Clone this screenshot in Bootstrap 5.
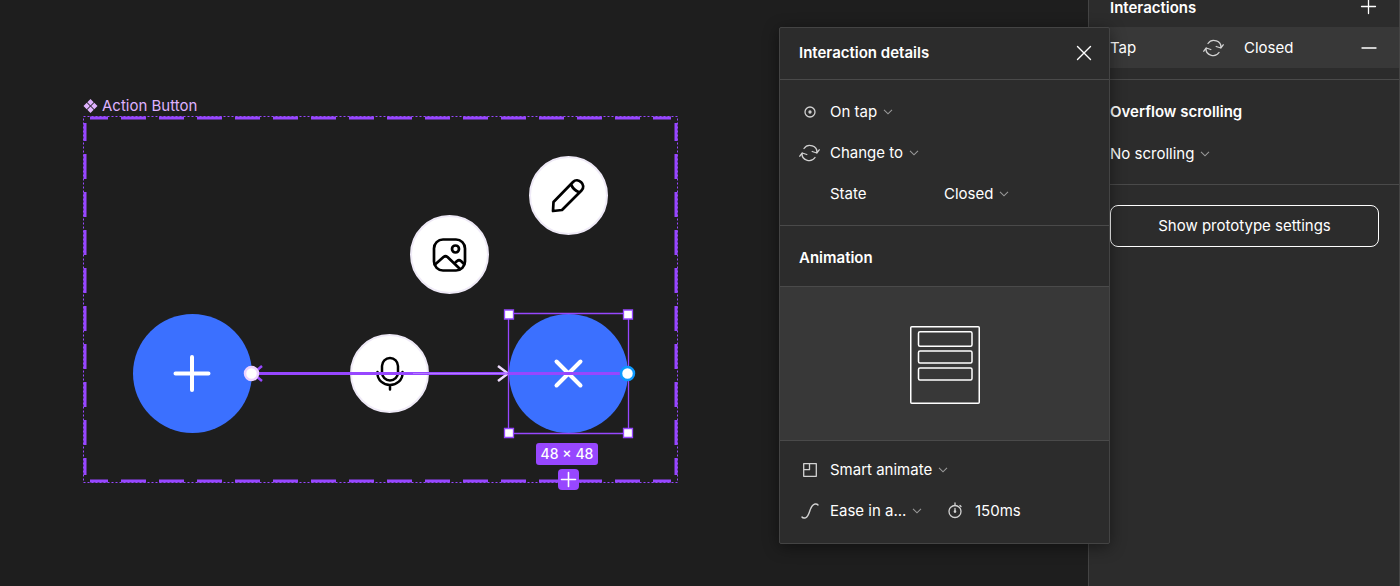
<!DOCTYPE html>
<html lang="en">
<head>
<meta charset="utf-8">
<meta name="viewport" content="width=device-width, initial-scale=1">
<title>Action Button – prototype</title>
<link href="https://cdn.jsdelivr.net/npm/bootstrap@5.3.0/dist/css/bootstrap.min.css" rel="stylesheet">
<script src="https://cdn.jsdelivr.net/npm/bootstrap@5.3.0/dist/js/bootstrap.bundle.min.js" defer></script>
<style>
  body { background: #1e1e1e; color: #fff; font: 400 15px/20px Inter, sans-serif; }
  h1, h2, h3 { font-size: 15px; line-height: 20px; font-weight: 600; margin: 0; }
  svg { display: block; flex: none; }
  .line-icon { fill: none; stroke: currentColor; stroke-linecap: round; stroke-linejoin: round; }
  .bare { background: none; border: 0; padding: 0; color: inherit; }
  .pale { color: #d2d2d2; }

  /* Canvas */
  .artboard { left: 83px; top: 116px; width: 595px; height: 367px; }
  .artboard-name { left: 0; top: -20px; color: #dfb2ff; white-space: nowrap; gap: 4px; }
  .node { border-radius: 50%; }
  .node-main { width: 119px; height: 119px; background: #3b70ff; color: #fff; }
  .node-sub { width: 79px; height: 79px; background: #fff; border: 2px solid #efeaf7; color: #000; }
  .n-plus { left: 50px; top: 198px; }
  .n-close { left: 426px; top: 198px; }
  .n-mic { left: 267px; top: 218px; }
  .n-image { left: 327px; top: 99px; }
  .n-pen { left: 446px; top: 40px; }
  .size-tag { left: 453px; top: 327px; width: 62px; height: 22px; border-radius: 3px; background: #9747ff; font-size: 14px; font-weight: 500; }
  .add-variant { left: 475px; top: 353px; width: 21px; height: 21px; border-radius: 4px; background: #9747ff; color: #fff; }

  /* Side bar */
  .sidebar { width: 312px; background: #2c2c2c; border: solid #444; border-width: 0 1px; flex: none; }
  .side-pad { padding-left: 21px; padding-right: 20px; }
  .side-head { height: 27px; padding-bottom: 10px; }
  .side-head h2 { line-height: 18px; }
  .tap-row { background: #383838; height: 41px; margin-bottom: 11px; }
  .tap-name { width: 93px; }
  .tap-target { margin-left: 20px; }
  .rule-top { border-top: 1px solid #4a4a4a; }
  .scroll-group { height: 105px; padding-top: 22px; }
  .btn-outline { width: 100%; height: 42px; border: 1px solid #fff; border-radius: 8px; }

  /* Details panel */
  .details { right: 290px; top: 27px; width: 331px; background: #2c2c2c; border: 1px solid #444; border-radius: 2px; box-shadow: 0 3px 16px rgba(0,0,0,.45); }
  .details-head { height: 51px; padding: 0 15px 2px 19px; }
  .trigger { padding: 11px 0; }
  .timing { padding: 8px 0 12px; }
  .anim-head { height: 61px; padding: 3px 0 0 19px; }
  .prop-row { height: 41px; gap: 10px; padding-left: 19px; }
  .icon-slot { width: 21px; flex: none; display: flex; justify-content: center; }
  .preview { background: #383838; height: 154px; padding-top: 2px; }
  .pick {
    appearance: none; border: 0; color: #fff; height: 24px; padding: 0 15px 0 0; font: inherit;
    background: url("data:image/svg+xml,%3Csvg xmlns='http://www.w3.org/2000/svg' width='10' height='6' fill='none' stroke='%23999' stroke-width='1.1'%3E%3Cpath d='M1 .8l4 4 4-4'/%3E%3C/svg%3E") no-repeat right center;
  }
  .pick-label { width: 104px; }
  .pick-ease { width: 92px; }
  .time-slot { margin-left: 12px; }
  .time { width: 60px; font: inherit; }
</style>
</head>
<body>
<div class="d-flex vh-100 overflow-hidden position-relative">

  <main class="flex-fill position-relative overflow-hidden">
    <section class="artboard position-absolute" aria-label="Action Button">
      <h1 class="artboard-name position-absolute d-flex align-items-center fw-normal">
        <svg width="15" height="14" viewBox="0 0 15 14" fill="currentColor"><path d="M7.500 0l3.200 3.200-3.200 3.200-3.200-3.200zM3.700 3.800L6.900 7l-3.200 3.200L.5 7zM11.300 3.800L14.500 7l-3.200 3.200L8.100 7zM7.500 7.600l3.200 3.200L7.500 14l-3.200-3.200z"/></svg>
        Action Button
      </h1>

      <!-- component set outline -->
      <svg class="position-absolute top-0 start-0" width="595" height="367" fill="none" stroke="#9747ff">
        <rect x=".5" y=".5" width="594" height="366" stroke-dasharray="2 2"/>
        <g stroke-width="3" stroke-dasharray="25 13" stroke-dashoffset="7">
          <path d="M7 2H588M7 365H588M2 7V359M593 7V359"/>
        </g>
      </svg>

      <button class="bare node node-main n-plus position-absolute d-flex align-items-center justify-content-center" aria-label="Open">
        <svg class="line-icon" width="39" height="39" stroke-width="4"><path d="M19 3v33M2.500 19.500h33"/></svg>
      </button>
      <button class="bare node node-main n-close position-absolute d-flex align-items-center justify-content-center" aria-label="Close">
        <svg class="line-icon" width="31" height="31" stroke-width="4"><path d="M3.500 3.500l24 24M27.500 3.500l-24 24"/></svg>
      </button>
      <div class="node node-sub n-mic position-absolute d-flex align-items-center justify-content-center">
        <svg class="line-icon" width="39" height="39" stroke-width="2.500"><rect x="12" y="4" width="16" height="22.500" rx="8"/><path d="M7.500 18v1.500a12.500 11.500 0 0 0 25 0v-1.500M20 31.500v4"/></svg>
      </div>
      <div class="node node-sub n-image position-absolute d-flex align-items-center justify-content-center">
        <svg class="line-icon" width="39" height="39" stroke-width="2.700"><rect x="4" y="4.500" width="31" height="31" rx="9"/><circle cx="25.500" cy="14" r="3.500"/><path d="M5 29.500l8.500-7.500q2-1.500 4 0l12.500 12M25 28l2-2q2-1.500 4 0l3 3"/></svg>
      </div>
      <div class="node node-sub n-pen position-absolute d-flex align-items-center justify-content-center">
        <svg class="line-icon" width="39" height="39" stroke-width="2.700"><path d="M4 35l.5-9L24 6c5-5 14 3 8.500 8.500L13 34zM22 8q2 6 8.500 8.500"/></svg>
      </div>

      <!-- prototype connections and selection box -->
      <svg class="position-absolute top-0 start-0" width="595" height="367" fill="none" stroke="#9747ff">
        <path d="M168 257.500H545" stroke-width="3"/>
        <path d="M179 250l-9 7.500 9 7.500" stroke-width="2.500"/>
        <path d="M415 250l10 7.500-10 7.500" stroke="#f0dcff" stroke-width="2.500"/>
        <path d="M170 257.500H545" stroke-width="2"/>
        <path d="M330 257.500H424" stroke="#b37aff" stroke-width="1"/>
        <path d="M425.500 197.500h120v120h-120z" stroke-width="1.300"/>
        <path d="M421.500 194h9v9h-9zM540.500 194h9v9h-9zM421.500 312.500h9v9h-9zM540.500 312.500h9v9h-9z" fill="#fff" stroke-width="1.300"/>
        <circle cx="168.500" cy="257.500" r="6.500" fill="#fff" stroke="#edd3ff" stroke-width="2.500"/>
        <circle cx="544.500" cy="257.500" r="6.500" fill="#fff" stroke="#0d99ff" stroke-width="2.500"/>
      </svg>

      <div class="size-tag position-absolute d-flex align-items-center justify-content-center">48 × 48</div>
      <button class="bare add-variant position-absolute d-flex align-items-center justify-content-center" aria-label="Add variant">
        <svg class="line-icon" width="17" height="17" stroke-width="1.600"><path d="M8.500 1.500v14M1.500 8.500h14"/></svg>
      </button>
    </section>
  </main>

  <aside class="sidebar">
    <div class="side-head side-pad d-flex align-items-end justify-content-between">
      <h2>Interactions</h2>
      <button class="bare" aria-label="Add interaction"><svg class="line-icon" width="20" height="20" stroke-width="1.300"><path d="M9.500 2.500v14M2.500 9.500h14"/></svg></button>
    </div>
    <div class="tap-row side-pad d-flex align-items-center">
      <span class="tap-name">Tap</span>
      <svg class="line-icon pale" width="21" height="20" stroke-width="1.300"><path d="M5 5.500a7 6.500 0 0 1 12.800 4.500M17.800 10l-4.600-1.500M17.800 10l2.400-3.200M16 14.500A7 6.500 0 0 1 3.200 10M3.200 10l4.600 1.500M3.200 10l-2.400 3.200"/></svg>
      <span class="tap-target">Closed</span>
      <button class="bare ms-auto" aria-label="Remove interaction"><svg class="line-icon" width="20" height="20" stroke-width="1.300"><path d="M3 10h14"/></svg></button>
    </div>
    <div class="rule-top side-pad scroll-group">
      <h2 class="mb-3 pb-1">Overflow scrolling</h2>
      <select class="pick" aria-label="Overflow scrolling"><option>No scrolling</option></select>
    </div>
    <div class="rule-top side-pad pt-3">
      <button class="btn-outline bare mt-1">Show prototype settings</button>
    </div>
  </aside>

  <section class="details position-absolute" aria-label="Interaction details">
    <header class="details-head d-flex align-items-center justify-content-between">
      <h2>Interaction details</h2>
      <button class="bare" aria-label="Close panel"><svg class="line-icon" width="20" height="20" stroke-width="1.400"><path d="M3.500 3.500l13 13M16.500 3.500l-13 13"/></svg></button>
    </header>
    <div class="rule-top trigger">
      <div class="prop-row d-flex align-items-center">
        <span class="icon-slot pale"><svg class="line-icon" width="12" height="12" stroke-width="1.300"><circle cx="6" cy="6" r="5"/><circle cx="6" cy="6" r="1" fill="currentColor"/></svg></span>
        <select class="pick" aria-label="Trigger"><option>On tap</option></select>
      </div>
      <div class="prop-row d-flex align-items-center">
        <span class="icon-slot pale"><svg class="line-icon" width="21" height="20" stroke-width="1.300"><path d="M5 5.500a7 6.500 0 0 1 12.800 4.500M17.800 10l-4.600-1.500M17.800 10l2.400-3.200M16 14.500A7 6.500 0 0 1 3.200 10M3.200 10l4.600 1.500M3.200 10l-2.400 3.200"/></svg></span>
        <select class="pick" aria-label="Action"><option>Change to</option></select>
      </div>
      <div class="prop-row d-flex align-items-center">
        <span class="icon-slot"></span>
        <label class="pick-label" for="state">State</label>
        <select class="pick" id="state"><option>Closed</option></select>
      </div>
    </div>
    <div class="rule-top anim-head d-flex align-items-center"><h3>Animation</h3></div>
    <div class="rule-top preview d-flex align-items-center justify-content-center">
      <svg class="line-icon" width="70" height="78" stroke-width="1.500"><rect x=".75" y=".75" width="68.500" height="76.500" rx="1"/><rect x="8.500" y="5.700" width="53.500" height="14.500" rx="1.500"/><rect x="8.500" y="25" width="53.500" height="12" rx="1.500"/><rect x="8.500" y="42" width="53.500" height="12" rx="1.500"/></svg>
    </div>
    <div class="rule-top timing">
      <div class="prop-row d-flex align-items-center">
        <span class="icon-slot pale"><svg class="line-icon" width="14" height="14" stroke-width="1.300"><path d="M.7.700h12.600v12.600H.7zM6.500.7v6H.7"/></svg></span>
        <select class="pick" aria-label="Animation type"><option>Smart animate</option></select>
      </div>
      <div class="prop-row d-flex align-items-center">
        <span class="icon-slot pale"><svg class="line-icon" width="18" height="16" stroke-width="1.400"><path d="M1 14q1 1.500 3.500.8C9.500 13 8 2 14 1q2-.3 3 1"/></svg></span>
        <select class="pick pick-ease" aria-label="Easing"><option>Ease in a...</option></select>
        <label class="icon-slot time-slot pale" for="duration" aria-label="Duration"><svg class="line-icon" width="14" height="17" stroke-width="1.300"><circle cx="7" cy="9.500" r="6"/><path d="M7 1v2.500M7 6.500v3.500M12 3.500l1 1"/><circle cx="7" cy="9.500" r=".7" fill="currentColor"/></svg></label>
        <input class="bare time" id="duration" value="150ms">
      </div>
    </div>
  </section>
</div>
</body>
</html>
